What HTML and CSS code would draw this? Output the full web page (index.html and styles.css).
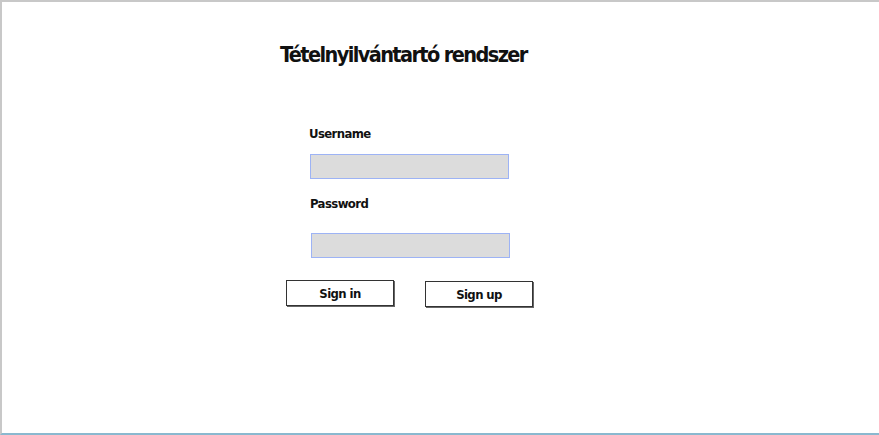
FILE: index.html
```html
<!DOCTYPE html>
<html lang="hu">
<head>
<meta charset="utf-8">
<title>Tételnyilvántartó rendszer</title>
<link rel="stylesheet" href="styles.css">
</head>
<body>
<div class="frame">
  <div class="content">
    <h1 class="title">Tételnyilvántartó rendszer</h1>
    <form class="form">
      <label class="label label-user" for="u">Username</label>
      <input class="field field-user" id="u" type="text">
      <label class="label label-pass" for="p">Password</label>
      <input class="field field-pass" id="p" type="password">
      <div class="buttons">
        <button type="button" class="btn btn-in">Sign in</button>
        <button type="button" class="btn btn-up">Sign up</button>
      </div>
    </form>
  </div>
</div>
</body>
</html>
```
FILE: styles.css
```css
html, body {
  margin: 0;
  padding: 0;
  background: #fff;
}
.frame {
  box-sizing: border-box;
  width: 879px;
  height: 435px;
  border-top: 2px solid #c8c8c8;
  border-left: 2px solid #c8c8c8;
  border-bottom: 2px solid #8ab8cf;
  font-family: "DejaVu Sans Condensed", "Liberation Sans", sans-serif;
  font-weight: bold;
  color: #111;
}
.content {
  display: flex;
  flex-direction: column;
  padding-left: 278px;
  padding-top: 38px;
}
.title {
  margin: 0;
  font-size: 21.5px;
  line-height: 30px;
  font-weight: bold;
  letter-spacing: -1.6px;
}
.form {
  display: flex;
  flex-direction: column;
  align-items: flex-start;
  margin-top: 55px;
}
.label {
  font-size: 13px;
  line-height: 18px;
  letter-spacing: -0.6px;
}
.label-user {
  margin-left: 29px;
}
.label-pass {
  margin-left: 30px;
  margin-top: 16px;
}
.field {
  -webkit-appearance: none;
  appearance: none;
  box-sizing: border-box;
  width: 199px;
  height: 25px;
  background: #dcdcdc;
  border: none;
  box-shadow: inset 0 0 0 1px #9db3f5;
  border-radius: 0;
  margin: 0;
  padding: 0;
  outline: none;
}
.field-user {
  margin-left: 30px;
  margin-top: 11px;
}
.field-pass {
  margin-left: 31px;
  margin-top: 20px;
}
.buttons {
  display: flex;
  align-items: flex-start;
  gap: 31px;
  margin-top: 22px;
  margin-left: 6px;
}
.btn {
  box-sizing: border-box;
  width: 108px;
  height: 26px;
  background: #fff;
  border: 1px solid #333;
  border-radius: 0;
  box-shadow: 1px 1px 0 #666;
  font-family: inherit;
  font-weight: bold;
  font-size: 13px;
  letter-spacing: -0.6px;
  color: #111;
  padding: 0;
}
.btn-up {
  margin-top: 1px;
}
```
